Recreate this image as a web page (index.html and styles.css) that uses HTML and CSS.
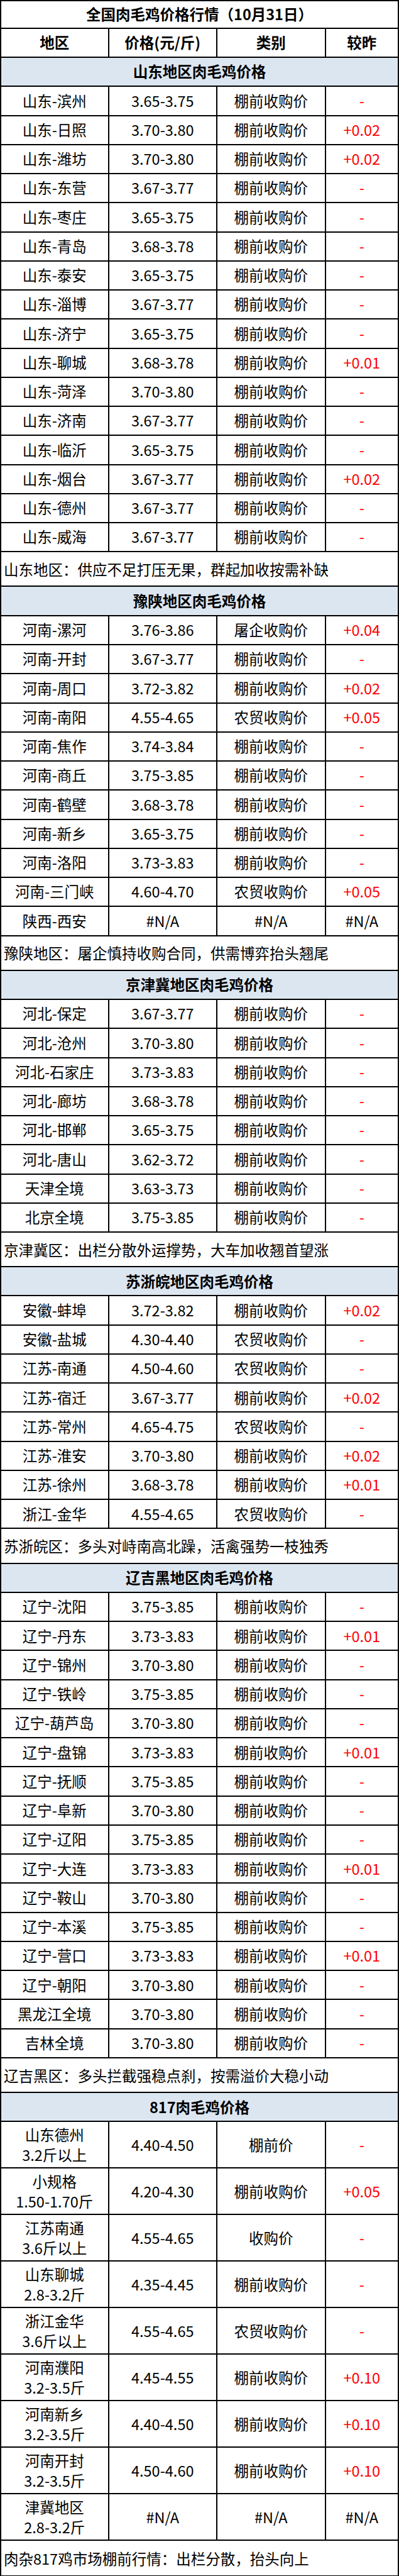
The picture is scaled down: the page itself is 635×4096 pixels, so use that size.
FILE: index.html
```html
<!DOCTYPE html>
<html lang="zh-CN">
<head>
<meta charset="utf-8">
<title>全国肉毛鸡价格行情</title>
<link rel="stylesheet" href="styles.css">
</head>
<body>
<div class="sheet">
  <div class="full title">全国肉毛鸡价格行情（10月31日）</div>
  <div class="row head"><div>地区</div><div>价格(元/斤)</div><div>类别</div><div>较昨</div></div>

  <div class="full sec">山东地区肉毛鸡价格</div>
  <div class="row"><div>山东-滨州</div><div>3.65-3.75</div><div>棚前收购价</div><div class="up">-</div></div>
  <div class="row"><div>山东-日照</div><div>3.70-3.80</div><div>棚前收购价</div><div class="up">+0.02</div></div>
  <div class="row"><div>山东-潍坊</div><div>3.70-3.80</div><div>棚前收购价</div><div class="up">+0.02</div></div>
  <div class="row"><div>山东-东营</div><div>3.67-3.77</div><div>棚前收购价</div><div class="up">-</div></div>
  <div class="row"><div>山东-枣庄</div><div>3.65-3.75</div><div>棚前收购价</div><div class="up">-</div></div>
  <div class="row"><div>山东-青岛</div><div>3.68-3.78</div><div>棚前收购价</div><div class="up">-</div></div>
  <div class="row"><div>山东-泰安</div><div>3.65-3.75</div><div>棚前收购价</div><div class="up">-</div></div>
  <div class="row"><div>山东-淄博</div><div>3.67-3.77</div><div>棚前收购价</div><div class="up">-</div></div>
  <div class="row"><div>山东-济宁</div><div>3.65-3.75</div><div>棚前收购价</div><div class="up">-</div></div>
  <div class="row"><div>山东-聊城</div><div>3.68-3.78</div><div>棚前收购价</div><div class="up">+0.01</div></div>
  <div class="row"><div>山东-菏泽</div><div>3.70-3.80</div><div>棚前收购价</div><div class="up">-</div></div>
  <div class="row"><div>山东-济南</div><div>3.67-3.77</div><div>棚前收购价</div><div class="up">-</div></div>
  <div class="row"><div>山东-临沂</div><div>3.65-3.75</div><div>棚前收购价</div><div class="up">-</div></div>
  <div class="row"><div>山东-烟台</div><div>3.67-3.77</div><div>棚前收购价</div><div class="up">+0.02</div></div>
  <div class="row"><div>山东-德州</div><div>3.67-3.77</div><div>棚前收购价</div><div class="up">-</div></div>
  <div class="row"><div>山东-威海</div><div>3.67-3.77</div><div>棚前收购价</div><div class="up">-</div></div>
  <div class="full note">山东地区：供应不足打压无果，群起加收按需补缺</div>

  <div class="full sec">豫陕地区肉毛鸡价格</div>
  <div class="row"><div>河南-漯河</div><div>3.76-3.86</div><div>屠企收购价</div><div class="up">+0.04</div></div>
  <div class="row"><div>河南-开封</div><div>3.67-3.77</div><div>棚前收购价</div><div class="up">-</div></div>
  <div class="row"><div>河南-周口</div><div>3.72-3.82</div><div>棚前收购价</div><div class="up">+0.02</div></div>
  <div class="row"><div>河南-南阳</div><div>4.55-4.65</div><div>农贸收购价</div><div class="up">+0.05</div></div>
  <div class="row"><div>河南-焦作</div><div>3.74-3.84</div><div>棚前收购价</div><div class="up">-</div></div>
  <div class="row"><div>河南-商丘</div><div>3.75-3.85</div><div>棚前收购价</div><div class="up">-</div></div>
  <div class="row"><div>河南-鹤壁</div><div>3.68-3.78</div><div>棚前收购价</div><div class="up">-</div></div>
  <div class="row"><div>河南-新乡</div><div>3.65-3.75</div><div>棚前收购价</div><div class="up">-</div></div>
  <div class="row"><div>河南-洛阳</div><div>3.73-3.83</div><div>棚前收购价</div><div class="up">-</div></div>
  <div class="row"><div>河南-三门峡</div><div>4.60-4.70</div><div>农贸收购价</div><div class="up">+0.05</div></div>
  <div class="row"><div>陕西-西安</div><div>#N/A</div><div>#N/A</div><div>#N/A</div></div>
  <div class="full note">豫陕地区：屠企慎持收购合同，供需博弈抬头翘尾</div>

  <div class="full sec">京津冀地区肉毛鸡价格</div>
  <div class="row"><div>河北-保定</div><div>3.67-3.77</div><div>棚前收购价</div><div class="up">-</div></div>
  <div class="row"><div>河北-沧州</div><div>3.70-3.80</div><div>棚前收购价</div><div class="up">-</div></div>
  <div class="row"><div>河北-石家庄</div><div>3.73-3.83</div><div>棚前收购价</div><div class="up">-</div></div>
  <div class="row"><div>河北-廊坊</div><div>3.68-3.78</div><div>棚前收购价</div><div class="up">-</div></div>
  <div class="row"><div>河北-邯郸</div><div>3.65-3.75</div><div>棚前收购价</div><div class="up">-</div></div>
  <div class="row"><div>河北-唐山</div><div>3.62-3.72</div><div>棚前收购价</div><div class="up">-</div></div>
  <div class="row"><div>天津全境</div><div>3.63-3.73</div><div>棚前收购价</div><div class="up">-</div></div>
  <div class="row"><div>北京全境</div><div>3.75-3.85</div><div>棚前收购价</div><div class="up">-</div></div>
  <div class="full note">京津冀区：出栏分散外运撑势，大车加收翘首望涨</div>

  <div class="full sec">苏浙皖地区肉毛鸡价格</div>
  <div class="row"><div>安徽-蚌埠</div><div>3.72-3.82</div><div>棚前收购价</div><div class="up">+0.02</div></div>
  <div class="row"><div>安徽-盐城</div><div>4.30-4.40</div><div>农贸收购价</div><div class="up">-</div></div>
  <div class="row"><div>江苏-南通</div><div>4.50-4.60</div><div>农贸收购价</div><div class="up">-</div></div>
  <div class="row"><div>江苏-宿迁</div><div>3.67-3.77</div><div>棚前收购价</div><div class="up">+0.02</div></div>
  <div class="row"><div>江苏-常州</div><div>4.65-4.75</div><div>农贸收购价</div><div class="up">-</div></div>
  <div class="row"><div>江苏-淮安</div><div>3.70-3.80</div><div>棚前收购价</div><div class="up">+0.02</div></div>
  <div class="row"><div>江苏-徐州</div><div>3.68-3.78</div><div>棚前收购价</div><div class="up">+0.01</div></div>
  <div class="row"><div>浙江-金华</div><div>4.55-4.65</div><div>农贸收购价</div><div class="up">-</div></div>
  <div class="full note">苏浙皖区：多头对峙南高北躁，活禽强势一枝独秀</div>

  <div class="full sec">辽吉黑地区肉毛鸡价格</div>
  <div class="row"><div>辽宁-沈阳</div><div>3.75-3.85</div><div>棚前收购价</div><div class="up">-</div></div>
  <div class="row"><div>辽宁-丹东</div><div>3.73-3.83</div><div>棚前收购价</div><div class="up">+0.01</div></div>
  <div class="row"><div>辽宁-锦州</div><div>3.70-3.80</div><div>棚前收购价</div><div class="up">-</div></div>
  <div class="row"><div>辽宁-铁岭</div><div>3.75-3.85</div><div>棚前收购价</div><div class="up">-</div></div>
  <div class="row"><div>辽宁-葫芦岛</div><div>3.70-3.80</div><div>棚前收购价</div><div class="up">-</div></div>
  <div class="row"><div>辽宁-盘锦</div><div>3.73-3.83</div><div>棚前收购价</div><div class="up">+0.01</div></div>
  <div class="row"><div>辽宁-抚顺</div><div>3.75-3.85</div><div>棚前收购价</div><div class="up">-</div></div>
  <div class="row"><div>辽宁-阜新</div><div>3.70-3.80</div><div>棚前收购价</div><div class="up">-</div></div>
  <div class="row"><div>辽宁-辽阳</div><div>3.75-3.85</div><div>棚前收购价</div><div class="up">-</div></div>
  <div class="row"><div>辽宁-大连</div><div>3.73-3.83</div><div>棚前收购价</div><div class="up">+0.01</div></div>
  <div class="row"><div>辽宁-鞍山</div><div>3.70-3.80</div><div>棚前收购价</div><div class="up">-</div></div>
  <div class="row"><div>辽宁-本溪</div><div>3.75-3.85</div><div>棚前收购价</div><div class="up">-</div></div>
  <div class="row"><div>辽宁-营口</div><div>3.73-3.83</div><div>棚前收购价</div><div class="up">+0.01</div></div>
  <div class="row"><div>辽宁-朝阳</div><div>3.70-3.80</div><div>棚前收购价</div><div class="up">-</div></div>
  <div class="row"><div>黑龙江全境</div><div>3.70-3.80</div><div>棚前收购价</div><div class="up">-</div></div>
  <div class="row"><div>吉林全境</div><div>3.70-3.80</div><div>棚前收购价</div><div class="up">-</div></div>
  <div class="full note">辽吉黑区：多头拦截强稳点刹，按需溢价大稳小动</div>

  <div class="full sec">817肉毛鸡价格</div>
  <div class="row tall"><div><span class="two">山东德州<br>3.2斤以上</span></div><div>4.40-4.50</div><div>棚前价</div><div class="up">-</div></div>
  <div class="row tall"><div><span class="two">小规格<br>1.50-1.70斤</span></div><div>4.20-4.30</div><div>棚前收购价</div><div class="up">+0.05</div></div>
  <div class="row tall"><div><span class="two">江苏南通<br>3.6斤以上</span></div><div>4.55-4.65</div><div>收购价</div><div class="up">-</div></div>
  <div class="row tall"><div><span class="two">山东聊城<br>2.8-3.2斤</span></div><div>4.35-4.45</div><div>棚前收购价</div><div class="up">-</div></div>
  <div class="row tall"><div><span class="two">浙江金华<br>3.6斤以上</span></div><div>4.55-4.65</div><div>农贸收购价</div><div class="up">-</div></div>
  <div class="row tall"><div><span class="two">河南濮阳<br>3.2-3.5斤</span></div><div>4.45-4.55</div><div>棚前收购价</div><div class="up">+0.10</div></div>
  <div class="row tall"><div><span class="two">河南新乡<br>3.2-3.5斤</span></div><div>4.40-4.50</div><div>棚前收购价</div><div class="up">+0.10</div></div>
  <div class="row tall"><div><span class="two">河南开封<br>3.2-3.5斤</span></div><div>4.50-4.60</div><div>棚前收购价</div><div class="up">+0.10</div></div>
  <div class="row tall"><div><span class="two">津冀地区<br>2.8-3.2斤</span></div><div>#N/A</div><div>#N/A</div><div>#N/A</div></div>
  <div class="full note last">肉杂817鸡市场棚前行情：出栏分散，抬头向上</div>
</div>
</body>
</html>
```

FILE: styles.css
```css
html, body {
  margin: 0;
  padding: 0;
  background: #ffffff;
}

body {
  font-family: "Noto Sans CJK SC", "Microsoft YaHei", "Noto Sans", sans-serif;
  color: #000000;
}

.sheet {
  width: 635px;
  box-sizing: border-box;
  border-top: 2px solid #000;
  border-left: 2px solid #000;
}

.row {
  display: grid;
  grid-template-columns: 171.5px 172.5px 172.5px 1fr;
  height: 46.25px;
}

.row > div,
.full {
  box-sizing: border-box;
  border-right: 2px solid #000;
  border-bottom: 2px solid #000;
  display: flex;
  align-items: center;
  justify-content: center;
  font-size: 23.5px;
  line-height: 1;
  white-space: nowrap;
}

.title {
  height: 43.6px;
  font-weight: 700;
}

.head {
  height: 46.4px;
}

.head > div {
  font-weight: 700;
}

.sec {
  height: 46.3px;
  background: #dce6f1;
  font-weight: 700;
}

.note {
  height: 55.2px;
  justify-content: flex-start;
  padding-left: 4px;
  padding-top: 2px;
}

.note.last {
  height: 56.5px;
}

.tall {
  height: 74px;
}

.two {
  display: block;
  text-align: center;
  line-height: 32px;
}

.up {
  color: #ff0000;
}
```
